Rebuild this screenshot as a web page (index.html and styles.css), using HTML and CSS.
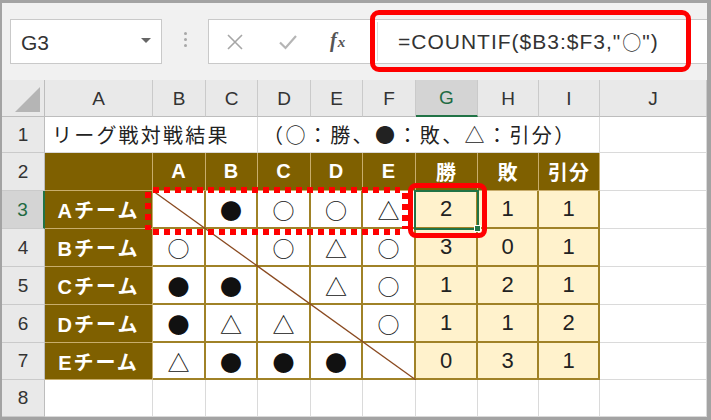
FILE: index.html
```html
<!DOCTYPE html>
<html lang="ja">

<head>
    <meta charset="UTF-8">
    <title>COUNTIF 対戦表</title>
    <link rel="stylesheet" href="styles.css">
</head>

<body>

    <div class="window">
        <!-- 数式バー -->
        <div class="fbar">
            <div class="namebox">
                <span class="ref">G3</span>
                <span class="caret"></span>
            </div>
            <div class="grip"><i></i><i></i><i></i></div>
            <div class="formula">
                <div class="tools">
                    <svg class="ico" width="18" height="18" viewBox="0 0 18 18">
                        <path d="M2 2 L16 16 M16 2 L2 16" stroke="#a6a6a6" stroke-width="1.6" fill="none"/>
                    </svg>
                    <svg class="ico" width="20" height="18" viewBox="0 0 20 18">
                        <path d="M2 9.5 L7.5 15 L18 3" stroke="#b5b5b5" stroke-width="2.2" fill="none"/>
                    </svg>
                    <span class="fx">f<span class="fx-x">x</span></span>
                </div>
                <div class="input">=COUNTIF($B3:$F3,"<span class="jp">○</span>")</div>
            </div>
            <div class="mark-formula"></div>
        </div>

        <!-- シート -->
        <div class="sheet">
            <div class="corner"><span class="tri"></span></div>
            <div class="ch">A</div>
            <div class="ch">B</div>
            <div class="ch">C</div>
            <div class="ch">D</div>
            <div class="ch">E</div>
            <div class="ch">F</div>
            <div class="ch ch-sel">G</div>
            <div class="ch">H</div>
            <div class="ch">I</div>
            <div class="ch">J</div>

            <div class="rh">1</div>
            <div class="cell title span3">リーグ戦対戦結果</div>
            <div class="cell title span6">（○：勝、●：敗、△：引分）</div>
            <div class="cell"></div>

            <div class="rh">2</div>
            <div class="hd"></div>
            <div class="hd">A</div>
            <div class="hd">B</div>
            <div class="hd">C</div>
            <div class="hd">D</div>
            <div class="hd">E</div>
            <div class="hd">勝</div>
            <div class="hd">敗</div>
            <div class="hd">引分</div>
            <div class="cell"></div>

            <div class="rh rh-sel">3</div>
            <div class="hd team">Aチーム</div>
            <div class="sym"></div>
            <div class="sym">●</div>
            <div class="sym">○</div>
            <div class="sym">○</div>
            <div class="sym">△</div>
            <div class="num">2</div>
            <div class="num">1</div>
            <div class="num">1</div>
            <div class="cell"></div>

            <div class="rh">4</div>
            <div class="hd team">Bチーム</div>
            <div class="sym">○</div>
            <div class="sym"></div>
            <div class="sym">○</div>
            <div class="sym">△</div>
            <div class="sym">○</div>
            <div class="num">3</div>
            <div class="num">0</div>
            <div class="num">1</div>
            <div class="cell"></div>

            <div class="rh">5</div>
            <div class="hd team">Cチーム</div>
            <div class="sym">●</div>
            <div class="sym">●</div>
            <div class="sym"></div>
            <div class="sym">△</div>
            <div class="sym">○</div>
            <div class="num">1</div>
            <div class="num">2</div>
            <div class="num">1</div>
            <div class="cell"></div>

            <div class="rh">6</div>
            <div class="hd team">Dチーム</div>
            <div class="sym">●</div>
            <div class="sym">△</div>
            <div class="sym">△</div>
            <div class="sym"></div>
            <div class="sym">○</div>
            <div class="num">1</div>
            <div class="num">1</div>
            <div class="num">2</div>
            <div class="cell"></div>

            <div class="rh">7</div>
            <div class="hd team">Eチーム</div>
            <div class="sym">△</div>
            <div class="sym">●</div>
            <div class="sym">●</div>
            <div class="sym">●</div>
            <div class="sym"></div>
            <div class="num">0</div>
            <div class="num">3</div>
            <div class="num">1</div>
            <div class="cell"></div>

            <div class="rh">8</div>
            <div class="cell"></div>
            <div class="cell"></div>
            <div class="cell"></div>
            <div class="cell"></div>
            <div class="cell"></div>
            <div class="cell"></div>
            <div class="cell"></div>
            <div class="cell"></div>
            <div class="cell"></div>
            <div class="cell"></div>

            <!-- 重ねる線と枠 -->
            <svg class="diag" width="263" height="189" viewBox="0 0 263 189">
                <line x1="0" y1="0" x2="263" y2="189" stroke="#8a4a20" stroke-width="1.3"/>
            </svg>
            <div class="cursor"><span class="handle"></span></div>
            <div class="mark-range"></div>
            <div class="mark-cell"></div>
        </div>
    </div>

</body>

</html>
```

FILE: styles.css
```css
* {
    margin: 0;
    padding: 0;
    box-sizing: border-box;
}

body {
    width: 711px;
    height: 420px;
    overflow: hidden;
    background: #fff;
    font-family: 'Liberation Sans', 'Noto Sans CJK JP', sans-serif;
    color: #222;
}

.window {
    width: 711px;
    height: 420px;
    border-style: solid;
    border-color: #a3a3a3;
    border-width: 3px 4px 3px 2px;
    background: #fff;
}

/* 数式バー */
.fbar {
    position: relative;
    height: 77px;
    background: #f1f1f1;
    display: flex;
    align-items: flex-start;
    padding-top: 16px;
    padding-left: 8px;
}

.namebox {
    width: 152px;
    height: 45px;
    background: #fff;
    border: 1px solid #c9c9c9;
    display: flex;
    align-items: center;
    justify-content: space-between;
    padding: 2px 10px 0 10px;
}

.ref {
    font-size: 21px;
    color: #333;
}

.caret {
    width: 0;
    height: 0;
    border-left: 5px solid transparent;
    border-right: 5px solid transparent;
    border-top: 5px solid #666;
    margin-bottom: 4px;
}

.grip {
    width: 46px;
    height: 45px;
    display: flex;
    flex-direction: column;
    align-items: center;
    justify-content: center;
    gap: 3px;
    padding-bottom: 4px;
}

.grip i {
    width: 3px;
    height: 3px;
    background: #a8a8a8;
    border-radius: 50%;
}

.formula {
    flex: 1;
    height: 45px;
    background: #fff;
    border: 1px solid #c9c9c9;
    border-right: none;
    display: flex;
}

.tools {
    width: 168px;
    display: flex;
    align-items: center;
    padding-left: 17px;
}

.tools .ico {
    margin-right: 34px;
}

.fx {
    font-family: 'Liberation Serif', serif;
    font-style: italic;
    font-weight: bold;
    font-size: 20px;
    color: #555;
    margin-left: -2px;
    margin-top: -3px;
}

.fx-x {
    font-size: 15px;
    margin-left: 1px;
}

.input {
    flex: 1;
    border-left: 1px solid #dcdcdc;
    margin: 2px 0;
    padding-left: 20px;
    display: flex;
    align-items: center;
    font-size: 21px;
    letter-spacing: 1px;
    color: #333;
}

.jp {
    font-family: 'Noto Sans CJK JP', sans-serif;
    font-size: 19px;
    letter-spacing: 0;
    margin: 0 1px;
}

.mark-formula {
    position: absolute;
    left: 368px;
    top: 7px;
    width: 321px;
    height: 62px;
    border: 5px solid #ff0000;
    border-radius: 9px;
}

/* シート */
.sheet {
    position: relative;
    display: grid;
    grid-template-columns: 43px 108px 53px 52px 53px 52px 53px 62px 61px 61px 107px;
    grid-template-rows: 37px 36px 38px 38px 38px 38px 38px 37px 37px;
}

.sheet > div {
    display: flex;
    align-items: center;
    justify-content: center;
}

.corner {
    background: #e9e9e9;
    border-right: 1px solid #bdbdbd;
    border-bottom: 1px solid #bdbdbd;
    position: relative;
}

.tri {
    position: absolute;
    right: 4px;
    bottom: 4px;
    width: 0;
    height: 0;
    border-left: 25px solid transparent;
    border-bottom: 25px solid #b5b5b5;
}

.ch {
    background: #e9e9e9;
    border-right: 1px solid #cacaca;
    border-bottom: 1px solid #bdbdbd;
    font-size: 19px;
    color: #333;
    padding-top: 1px;
}

.ch-sel {
    background: #d4d4d4;
    border-bottom: 2px solid #217346;
    color: #1f6b43;
}

.rh {
    background: #e9e9e9;
    border-right: 1px solid #bdbdbd;
    border-bottom: 1px solid #cacaca;
    font-size: 19px;
    color: #333;
}

.rh-sel {
    background: #d4d4d4;
    border-right: 2px solid #217346;
    color: #1f6b43;
}

.cell {
    border-right: 1px solid #dadada;
    border-bottom: 1px solid #dadada;
}

.sheet > .title {
    justify-content: flex-start;
    font-family: 'Noto Sans CJK JP', sans-serif;
    font-size: 20px;
    letter-spacing: 2.2px;
    padding-left: 7px;
    white-space: nowrap;
}

.span3 {
    grid-column: span 3;
}

.span6 {
    grid-column: span 6;
}

.sheet > .span6 {
    padding-left: 5px;
    letter-spacing: 2.4px;
}

.hd {
    background: #7f6000;
    border-right: 1px solid #c8ad6c;
    border-bottom: 1px solid #c8ad6c;
    color: #fff;
    font-weight: bold;
    font-size: 20px;
    letter-spacing: 1px;
}

.team {
    letter-spacing: 2px;
}

.sym {
    background: #fff;
    border-right: 2px solid #a08227;
    border-bottom: 2px solid #a08227;
    font-family: 'Noto Sans CJK JP', sans-serif;
    font-size: 22px;
    color: #111;
}

.num {
    background: #fff2cc;
    border-right: 2px solid #a08227;
    border-bottom: 2px solid #a08227;
    font-size: 22px;
    color: #222;
}

.diag {
    position: absolute;
    left: 151px;
    top: 111px;
}

.cursor {
    position: absolute;
    left: 412px;
    top: 110px;
    width: 65px;
    height: 40px;
    border: 2px solid #217346;
}

.handle {
    position: absolute;
    right: -4px;
    bottom: -4px;
    width: 7px;
    height: 7px;
    background: #217346;
    border: 1px solid #fff;
}

.mark-range {
    position: absolute;
    left: 143px;
    top: 107px;
    width: 263px;
    height: 48px;
    background:
        repeating-linear-gradient(90deg, #ff0000 0 6px, transparent 6px 11px) 8px 0 / 247px 6px no-repeat,
        repeating-linear-gradient(90deg, #ff0000 0 6px, transparent 6px 11px) 8px 42px / 247px 6px no-repeat,
        repeating-linear-gradient(180deg, #ff0000 0 6px, transparent 6px 11px) 0 5px / 6px 38px no-repeat,
        repeating-linear-gradient(180deg, #ff0000 0 6px, transparent 6px 11px) 257px 6px / 6px 36px no-repeat;
}

.mark-cell {
    position: absolute;
    left: 406px;
    top: 103px;
    width: 79px;
    height: 55px;
    border: 5px solid #ff0000;
    border-radius: 8px;
}
```
